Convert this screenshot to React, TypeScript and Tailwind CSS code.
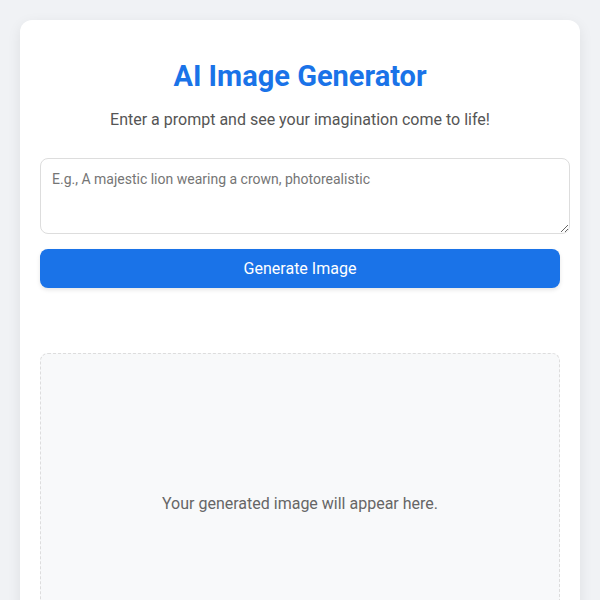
export default function App() {
  return (
    <div
      className="min-h-screen bg-[#f0f2f5] p-[20px]"
      style={{ fontFamily: "Roboto, 'Noto Sans', sans-serif" }}
    >
      <div className="w-[560px] rounded-[12px] bg-white px-[20px] pt-[40px] pb-[40px] shadow-[0_4px_14px_rgba(0,0,0,0.08)]">
        <h1 className="text-center text-[29px] font-bold leading-[33px] text-[#1a73e8]">
          AI Image Generator
        </h1>
        <p className="mt-[17px] text-center text-[16px] leading-[19px] text-[#555]">
          Enter a prompt and see your imagination come to life!
        </p>
        <textarea
          className="mt-[29px] block h-[76px] w-[530px] resize-y rounded-[8px] border border-[#ddd] px-[11px] py-[12px] text-[14px] leading-[16px] text-[#333] outline-none placeholder:text-[#757575]"
          placeholder="E.g., A majestic lion wearing a crown, photorealistic"
        />
        <button className="mt-[15px] flex h-[39px] w-[520px] items-center justify-center rounded-[8px] bg-[#1a73e8] text-[16px] font-normal text-white shadow-[0_2px_4px_rgba(0,0,0,0.1)]">
          Generate Image
        </button>
        <div className="mt-[65px] flex h-[302px] w-[520px] items-center justify-center rounded-[8px] border border-dashed border-[#ddd] bg-[#f8f9fa]">
          <p className="text-[16px] text-[#666]">Your generated image will appear here.</p>
        </div>
      </div>
    </div>
  );
}
